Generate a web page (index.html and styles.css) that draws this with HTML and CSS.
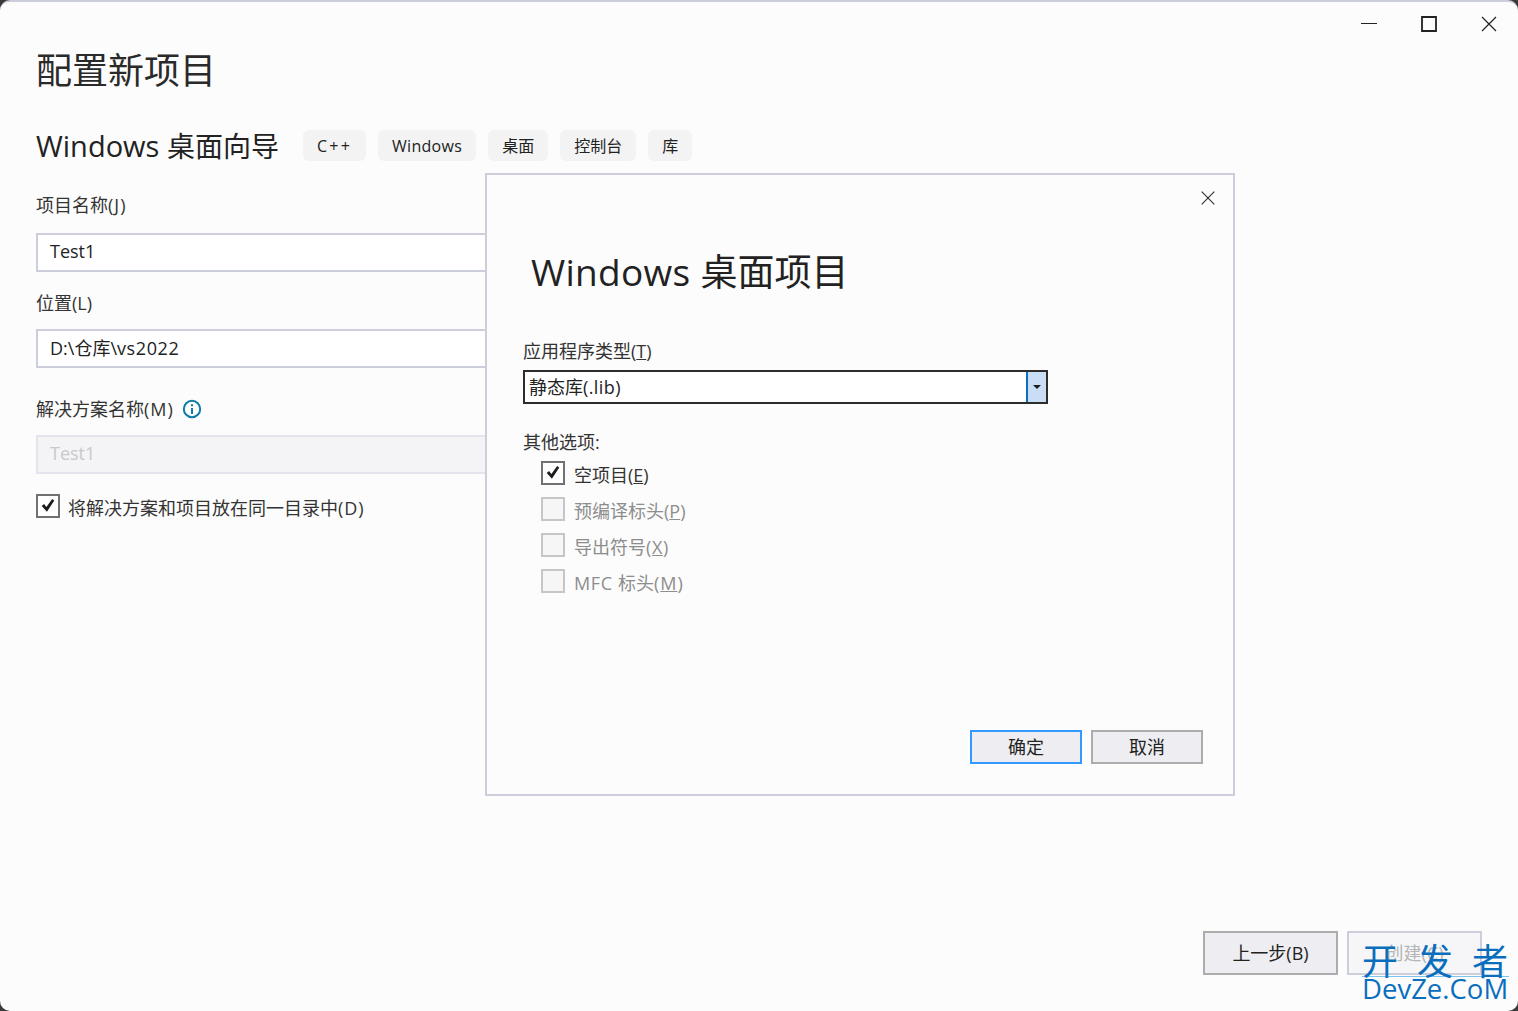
FILE: index.html
```html
<!DOCTYPE html>
<html lang="zh-CN">
<head>
<meta charset="utf-8">
<title>配置新项目</title>
<link rel="stylesheet" href="styles.css">
</head>
<body>
<div class="window">
  <div class="controls">
    <svg class="ctl" viewBox="0 0 20 20"><path d="M2 9.5H18" /></svg>
    <svg class="ctl" viewBox="0 0 20 20"><path class="thick" d="M3 3H17V17H3Z" /></svg>
    <svg class="ctl" viewBox="0 0 20 20"><path d="M3 3L17 17M17 3L3 17" /></svg>
  </div>
  <h1 class="title">配置新项目</h1>
  <div class="subhead">
    <h2 class="subtitle"><span class="sub-lat">Windows </span>桌面向导</h2>
    <div class="tags">
      <span class="tag tag-wide">C++</span>
      <span class="tag"><span class="sp3">Windows</span></span>
      <span class="tag">桌面</span>
      <span class="tag">控制台</span>
      <span class="tag">库</span>
    </div>
  </div>
  <div class="form">
    <label class="label l1">项目名称<span class="sp10">(J)</span></label>
    <div class="input">Test1</div>
    <label class="label l2">位置(L)</label>
    <div class="input input-path">D:\仓库\<span class="sp6">vs2022</span></div>
    <label class="label l3"><span>解决方案名称<span class="sp10">(M)</span></span>
      <svg class="info" viewBox="0 0 20 20"><circle cx="10" cy="10" r="8.2"/><path d="M10 9V15M10 5.2V7.2"/></svg>
    </label>
    <div class="input disabled">Test1</div>
    <div class="check-row main-check">
      <span class="box"><svg viewBox="0 0 20 20"><path d="M3 10L5.6 7.8L8.2 11L14.6 2.2L17 4L8.8 16.4Z"/></svg></span>
      <span>将解决方案和项目放在同一目录中<span class="sp10">(D)</span></span>
    </div>
  </div>
  <div class="footer">
    <button class="btn big">上一步(B)</button>
    <button class="btn big off">创建(C)</button>
  </div>

  <div class="dialog">
    <svg class="dlg-close" viewBox="0 0 20 20"><path d="M3 3L17 17M17 3L3 17"/></svg>
    <h2 class="dlg-title"><span class="sp3">Windows </span>桌面项目</h2>
    <div class="label dl1">应用程序类型(<u>T</u>)</div>
    <div class="select">
      <span class="select-val">静态库<span class="sp4">(.lib)</span></span>
      <span class="select-btn"><i class="arrow"></i></span>
    </div>
    <div class="label dl2">其他选项:</div>
    <div class="opts">
      <div class="check-row">
        <span class="box"><svg viewBox="0 0 20 20"><path d="M3 10L5.6 7.8L8.2 11L14.6 2.2L17 4L8.8 16.4Z"/></svg></span>
        <span class="opt-text">空项目(<u>E</u>)</span>
      </div>
      <div class="check-row off"><span class="box"></span><span class="opt-text">预编译标头(<u>P</u>)</span></div>
      <div class="check-row off"><span class="box"></span><span class="opt-text">导出符号<span class="sp6">(<u>X</u>)</span></span></div>
      <div class="check-row off"><span class="box"></span><span class="opt-text"><span class="sp6">MFC </span>标头<span class="sp10">(<u>M</u>)</span></span></div>
    </div>
    <div class="dlg-actions">
      <button class="btn small primary">确定</button>
      <button class="btn small">取消</button>
    </div>
  </div>

  <div class="watermark">
    <div class="wm-top">开发者</div>
    <div class="wm-bottom">DevZe.CoM</div>
  </div>
</div>
</body>
</html>
```
FILE: styles.css
```css
* { box-sizing: border-box; }
html, body { margin: 0; height: 100%; background: #3a3a3a; overflow: hidden; }
body {
  font-family: "Open Sans", "Noto Sans CJK SC", sans-serif;
  color: #222;
}
.sp3 { letter-spacing: 0.3px; }
.sp4 { letter-spacing: 0.4px; }
.sp6 { letter-spacing: 0.6px; }
.sp10 { letter-spacing: 1px; }
.sub-lat { font-size: 29px; }
.window {
  position: relative;
  width: 1518px;
  height: 1011px;
  background: #fcfcfc;
  border-top: 2px solid #cbcddd;
  border-radius: 10px;
  display: flex;
  flex-direction: column;
  padding: 0 36px;
  overflow: hidden;
}
.controls {
  position: absolute;
  top: 12px;
  right: 19px;
  display: flex;
  gap: 40px;
}
.ctl { width: 20px; height: 20px; fill: none; stroke: #222; stroke-width: 1.2; }
.ctl .thick { stroke-width: 1.8; }
.title {
  margin: 44px 0 0;
  font-size: 36px;
  line-height: 50px;
  font-weight: 400;
  color: #2a2a2a;
}
.subhead {
  margin-top: 34px;
  display: flex;
  align-items: center;
  height: 31px;
}
.subtitle {
  margin: 0;
  font-size: 28px;
  line-height: 31px;
  font-weight: 400;
  color: #222;
  width: 267px;
  white-space: nowrap;
}
.tags { display: flex; gap: 12px; }
.tag {
  height: 31px;
  padding: 0 14px;
  background: #f3f3f3;
  border-radius: 6px;
  font-size: 16px;
  line-height: 32px;
  color: #222;
}
.tag-wide { letter-spacing: 2.2px; }
.form { width: 470px; }
.label {
  display: block;
  font-size: 18px;
  line-height: 24px;
  color: #333;
}
.l1 { margin-top: 32px; }
.l2 { margin-top: 19px; }
.l3 { margin-top: 29px; display: flex; align-items: center; gap: 8px; }
.input {
  margin-top: 16px;
  height: 39px;
  padding-left: 12px;
  background: #fff;
  border: 2px solid #cccedb;
  font-size: 18px;
  line-height: 32px;
  color: #222;
}
.input-path { line-height: 34px; }
.l2 + .input { margin-top: 14px; }
.l3 + .input { margin-top: 14px; }
.input.disabled {
  background: #f4f4f6;
  border-color: #e4e4ee;
  color: #c9c9c9;
}
.info { width: 20px; height: 20px; fill: none; stroke: #0e7ba8; stroke-width: 2; }
.check-row {
  display: flex;
  align-items: center;
  gap: 9px;
  font-size: 18px;
  line-height: 24px;
  color: #333;
}
.main-check { margin-top: 20px; }
.main-check > span:last-child { margin-left: -1px; position: relative; top: 2px; }
.opt-text { position: relative; top: 2px; }
.box {
  flex: none;
  width: 24px;
  height: 24px;
  border: 2px solid #717171;
  background: #fff;
  display: flex;
  align-items: center;
  justify-content: center;
}
.box svg { width: 18px; height: 18px; fill: #1e1e1e; }
.check-row.off { color: #8d8d8d; }
.check-row.off .box { border-color: #c6c6c6; background: #f6f6f6; }
.footer {
  margin-top: auto;
  margin-bottom: 36px;
  display: flex;
  justify-content: flex-end;
  gap: 9px;
}
.btn {
  font-family: inherit;
  background: #eeeef2;
  border: 2px solid #acacac;
  color: #222;
  font-size: 18px;
  padding: 0 0 2px;
}
.btn.big { width: 135px; height: 44px; }
.btn.big.off { background: #f6f6f8; border-color: #cccedb; color: #b5b5b5; }
.btn.small { width: 112px; height: 34px; font-size: 18px; line-height: 28px; padding: 0; }
.btn.primary { border-color: #3399ff; }
.dialog {
  position: absolute;
  left: 485px;
  top: 171px;
  width: 750px;
  height: 623px;
  background: #fcfcfc;
  border: 2px solid #cccedb;
  padding: 0 32px 0 36px;
  display: flex;
  flex-direction: column;
}
.dlg-close {
  position: absolute;
  top: 14px;
  right: 16px;
  width: 18px;
  height: 18px;
  fill: none;
  stroke: #333;
  stroke-width: 1.3;
}
.dlg-title {
  margin: 72px 0 0 8px;
  font-size: 37px;
  line-height: 50px;
  font-weight: 400;
  color: #222;
}
.dl1 { margin-top: 42px; }
.dl2 { margin-top: 26px; }
.select {
  margin-top: 7px;
  width: 525px;
  height: 34px;
  border: 2px solid #2c2c2c;
  background: #fff;
  display: flex;
  align-items: stretch;
}
.select-val { flex: 1; padding-left: 4px; font-size: 18px; line-height: 30px; color: #222; }
.select-btn {
  width: 20px;
  background: #c9def5;
  border-left: 2px solid #0a6fc2;
  display: flex;
  align-items: center;
  justify-content: center;
}
.arrow {
  width: 0;
  height: 0;
  border-left: 4px solid transparent;
  border-right: 4px solid transparent;
  border-top: 4px solid #1e1e1e;
}
.opts {
  margin: 7px 0 0 18px;
  display: flex;
  flex-direction: column;
  gap: 12px;
}
.dlg-actions {
  margin-top: auto;
  margin-bottom: 30px;
  margin-right: -1px;
  transform: translateX(1px);
  display: flex;
  justify-content: flex-end;
  gap: 9px;
}
.watermark {
  position: absolute;
  left: 1362px;
  top: 940px;
  width: 147px;
  color: #0a6ebd;
}
.wm-top {
  font-size: 36px;
  line-height: 40px;
  height: 35px;
  letter-spacing: 19px;
  white-space: nowrap;
  border-bottom: 1px solid #7cc4ee;
}
.wm-bottom {
  font-size: 27.5px;
  line-height: 24px;
  white-space: nowrap;
}
```
